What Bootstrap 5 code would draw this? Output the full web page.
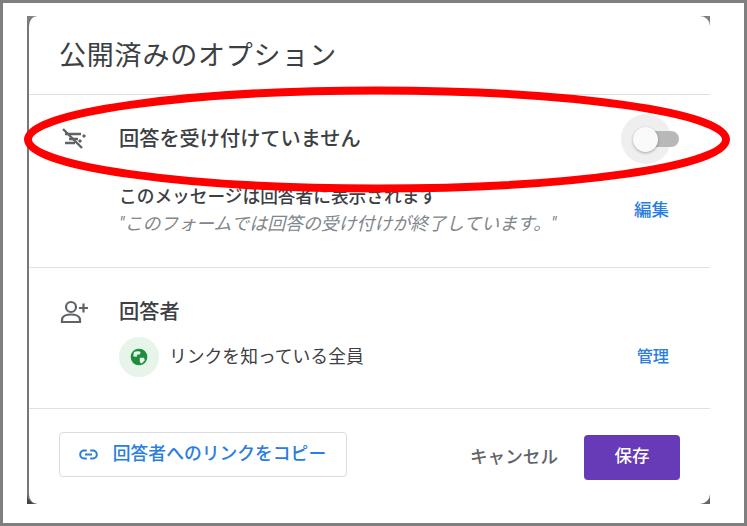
<!DOCTYPE html>
<html lang="ja">
<head>
    <meta charset="UTF-8">
    <meta name="viewport" content="width=device-width, initial-scale=1.0">
    <title>公開済みのオプション</title>
    <link href="https://cdn.jsdelivr.net/npm/bootstrap@5.3.0/dist/css/bootstrap.min.css" rel="stylesheet">
    <style>
        html, body { height: 100%; }
        body { font-family: "Roboto", "Noto Sans CJK JP", sans-serif; background: #fff; color: #3c4043; overflow: hidden; }
        .shot-frame { position: relative; width: 747px; height: 526px; border: 3px solid #7f7f7f; padding: 13px 34px 19px 24px; }
        .shot-corners { height: 488px; background: linear-gradient(#7f7f7f, #7f7f7f) top left / 14px 14px no-repeat, linear-gradient(#7f7f7f, #7f7f7f) top right / 14px 14px no-repeat, linear-gradient(#444, #444) bottom left / 10px 10px no-repeat, linear-gradient(#666, #666) bottom right / 10px 10px no-repeat; }
        .dlg { height: 488px; background: #fff; border-left: 2px solid #77777a; border-radius: 10px; display: flex; flex-direction: column; }
        .dlg-title { height: 79px; padding: 22px 0 0 30px; font-size: 27px; line-height: 36px; letter-spacing: .8px; color: #3c4043; border-bottom: 1px solid #e0e0e0; font-weight: 400; margin: 0; }
        .sec-accept { height: 173px; border-bottom: 1px solid #e0e0e0; }
        .sec-people { height: 141px; border-bottom: 1px solid #e0e0e0; }
        .row-icon { width: 90px; padding-left: 31px; flex: none; }
        .row-title { font-size: 20.2px; font-weight: 500; line-height: 28px; color: #3c4043; }
        .msg-title { font-size: 17.7px; font-weight: 500; line-height: 24px; color: #3c4043; }
        .msg-body { font-size: 17.9px; font-style: italic; line-height: 24px; margin-top: 3px; color: #80868b; }
        .txt-link { font-size: 17.5px; font-weight: 500; color: #2a7de1; text-decoration: none; }
        .txt-link-sm { font-size: 16.2px; }
        .toggle-wrap { position: relative; width: 50px; height: 50px; background: #efefef; border-radius: 50%; }
        .toggle-track { position: absolute; left: 24px; top: 17px; width: 34px; height: 16px; background: #b8b8b8; border-radius: 8px; }
        .toggle-thumb { position: absolute; left: 12px; top: 13px; width: 25px; height: 25px; background: #fafafa; border-radius: 50%; box-shadow: 0 1px 3px rgba(0, 0, 0, .3); }
        .globe-chip { width: 40px; height: 40px; background: #e6f4ea; border-radius: 50%; }
        .people-text { font-size: 17.8px; line-height: 24px; color: #3c4043; }
        .copy-btn { width: 288px; height: 45px; border: 1px solid #dadce0; border-radius: 4px; background: #fff; color: #2a7de1; font-size: 17.8px; font-weight: 500; padding: 0; gap: 14px; }
        .cancel-btn { font-size: 17.6px; font-weight: 500; color: #5f6368; border: 0; background: none; padding: 0; }
        .save-btn { width: 96px; height: 45px; background: #673ab7; color: #fff; font-size: 17.5px; font-weight: 500; border: 0; border-radius: 4px; padding: 0 0 2px; }
        .red-ring { position: absolute; left: -3px; top: -3px; pointer-events: none; }
    </style>
</head>
<body>
    <div class="shot-frame">
        <div class="shot-corners">
            <div class="dlg">
                <h1 class="dlg-title">公開済みのオプション</h1>

                <div class="sec-accept">
                    <div class="d-flex align-items-center" style="height: 88px">
                        <div class="row-icon d-flex">
                            <svg width="28" height="28" viewBox="0 0 28 28" fill="none" stroke="#5f6368" stroke-width="2.4">
                                <path d="M3 4 L22 23"/>
                                <path d="M5 9 H21 M9 14 H18 M5 18 H15"/>
                                <path d="M25 10 l-2 2 M21 15 l-2 2" stroke-width="3"/>
                            </svg>
                        </div>
                        <div class="row-title flex-grow-1">回答を受け付けていません</div>
                        <div class="toggle-wrap" style="margin-right: 39px">
                            <span class="toggle-track"></span>
                            <span class="toggle-thumb"></span>
                        </div>
                    </div>
                    <div class="d-flex justify-content-between align-items-center" style="padding: 2px 41px 0 90px">
                        <div>
                            <div class="msg-title">このメッセージは回答者に表示されます</div>
                            <div class="msg-body">"このフォームでは回答の受け付けが終了しています。"</div>
                        </div>
                        <a href="#" class="txt-link">編集</a>
                    </div>
                </div>

                <div class="sec-people">
                    <div class="d-flex align-items-center" style="height: 28px; margin-top: 30px">
                        <div class="row-icon d-flex">
                            <svg width="30" height="26" viewBox="0 0 30 26" fill="none" stroke="#5f6368" stroke-width="2.2">
                                <circle cx="11" cy="8" r="5"/>
                                <path d="M2 23 V21 C2 17 7 15.5 11 15.5 C15 15.5 20 17 20 21 V23 Z"/>
                                <path d="M19 9 H28 M23.5 4.5 V13.5"/>
                            </svg>
                        </div>
                        <div class="row-title">回答者</div>
                    </div>
                    <div class="d-flex align-items-center justify-content-between" style="padding: 11px 41px 0 90px">
                        <div class="d-flex align-items-center gap-2">
                            <div class="globe-chip d-flex align-items-center justify-content-center">
                                <svg width="20" height="20" viewBox="0 0 24 24">
                                    <circle cx="12" cy="12" r="10" fill="#1e8e3e"/>
                                    <path d="M6 6 C9 4.5 13 5 14 6 L13 9 L10 9 L9 12 L5 11 Z M13 13 L18 13 L19 16 L15 20 L13 18 Z" fill="#e6f4ea"/>
                                </svg>
                            </div>
                            <div class="people-text" style="padding-left: 2px">リンクを知っている全員</div>
                        </div>
                        <a href="#" class="txt-link txt-link-sm">管理</a>
                    </div>
                </div>

                <div class="d-flex align-items-start justify-content-between" style="padding: 23px 30px 0 30px">
                    <button class="copy-btn d-flex align-items-center justify-content-center">
                        <svg width="21" height="21" viewBox="0 0 24 24" fill="none" stroke="#2a7de1" stroke-width="2.3" style="margin-left: -2px">
                            <path d="M10 7.5 H7 a4.5 4.5 0 0 0 0 9 H10 M14 7.5 H17 a4.5 4.5 0 0 1 0 9 H14 M8 12 H16"/>
                        </svg>
                        <span>回答者へのリンクをコピー</span>
                    </button>
                    <div class="d-flex align-items-center" style="gap: 26px; margin-top: 3px">
                        <button class="cancel-btn">キャンセル</button>
                        <button class="save-btn">保存</button>
                    </div>
                </div>
            </div>
        </div>

        <svg class="red-ring" width="747" height="526" fill="none">
            <ellipse cx="377" cy="139.5" rx="349" ry="49" stroke="#f00" stroke-width="8"/>
        </svg>
    </div>
</body>
</html>
